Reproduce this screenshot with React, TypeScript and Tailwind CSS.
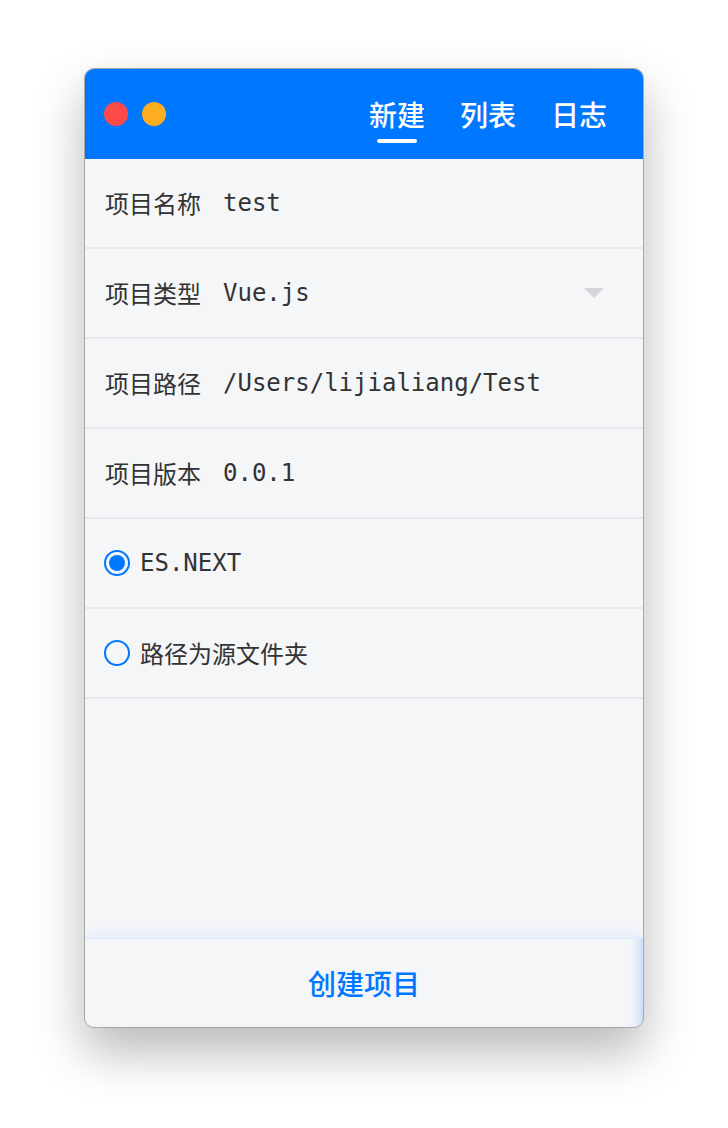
import React from 'react';

const cjk = { fontFamily: '"Noto Sans CJK SC", "Noto Sans", sans-serif' };
const mono = { fontFamily: '"DejaVu Sans Mono", "Liberation Mono", monospace' };

interface Field {
  label: string;
  value: string;
  select?: boolean;
}

const fields: Field[] = [
  { label: '项目名称', value: 'test' },
  { label: '项目类型', value: 'Vue.js', select: true },
  { label: '项目路径', value: '/Users/lijialiang/Test' },
  { label: '项目版本', value: '0.0.1' },
];

const tabs = ['新建', '列表', '日志'];

const Radio: React.FC<{ checked?: boolean; label: string; isMono?: boolean }> = ({ checked, label, isMono }) => (
  <div className="flex h-[90px] items-center border-b-2 border-[#e6e8eb] pl-[19px]">
    <span className="flex h-[26px] w-[26px] items-center justify-center rounded-full border-2 border-[#0077ff]">
      {checked && <span className="h-[16px] w-[16px] rounded-full bg-[#0077ff]" />}
    </span>
    <span className="ml-[10px] text-[24px] text-[#333]" style={isMono ? mono : cjk}>
      {label}
    </span>
  </div>
);

const App: React.FC = () => {
  return (
    <div className="flex min-h-[1128px] justify-center bg-white pt-[68px]" style={cjk}>
      <div className="flex h-[960px] w-[560px] flex-col overflow-hidden rounded-[10px] border border-[#a8a8a8] bg-[#f5f6f8] shadow-[0_24px_50px_rgba(0,0,0,0.28)]">
        {/* title bar */}
        <div className="flex h-[90px] shrink-0 items-center bg-[#0077ff] pl-[19px] pr-[36px]">
          <span className="h-[24px] w-[24px] rounded-full bg-[#ff4a4a]" />
          <span className="ml-[14px] h-[24px] w-[24px] rounded-full bg-[#ffad21]" />
          <div className="ml-auto flex gap-[35px]">
            {tabs.map((t, i) => (
              <div key={t} className="relative flex flex-col items-center">
                <span className="text-[28px] font-medium leading-[40px] text-white">{t}</span>
                {i === 0 && (
                  <span className="absolute top-[45px] h-[4px] w-[40px] rounded-full bg-white" />
                )}
              </div>
            ))}
          </div>
        </div>

        {/* form rows */}
        {fields.map(f => (
          <div key={f.label} className="flex h-[90px] shrink-0 items-center border-b-2 border-[#e6e8eb] pl-[20px] pr-[39px]">
            <span className="text-[24px] text-[#333]">{f.label}</span>
            <span className="ml-[22px] text-[24px] text-[#333]" style={mono}>
              {f.value}
            </span>
            {f.select && (
              <svg className="ml-auto" width="20" height="10" viewBox="0 0 20 10">
                <path d="M0 0 H20 L10 10 Z" fill="#d4d6d9" />
              </svg>
            )}
          </div>
        ))}
        <Radio checked label="ES.NEXT" isMono />
        <Radio label="路径为源文件夹" />

        <div className="flex-1" />

        {/* footer */}
        <div className="flex h-[90px] shrink-0 items-center justify-center border-t-2 border-[#e2ecfa] shadow-[0_-4px_10px_rgba(0,119,255,0.07),inset_-10px_0_10px_-6px_rgba(0,119,255,0.22)]">
          <span className="text-[28px] font-medium text-[#0077ff]">创建项目</span>
        </div>
      </div>
    </div>
  );
};

export default App;
